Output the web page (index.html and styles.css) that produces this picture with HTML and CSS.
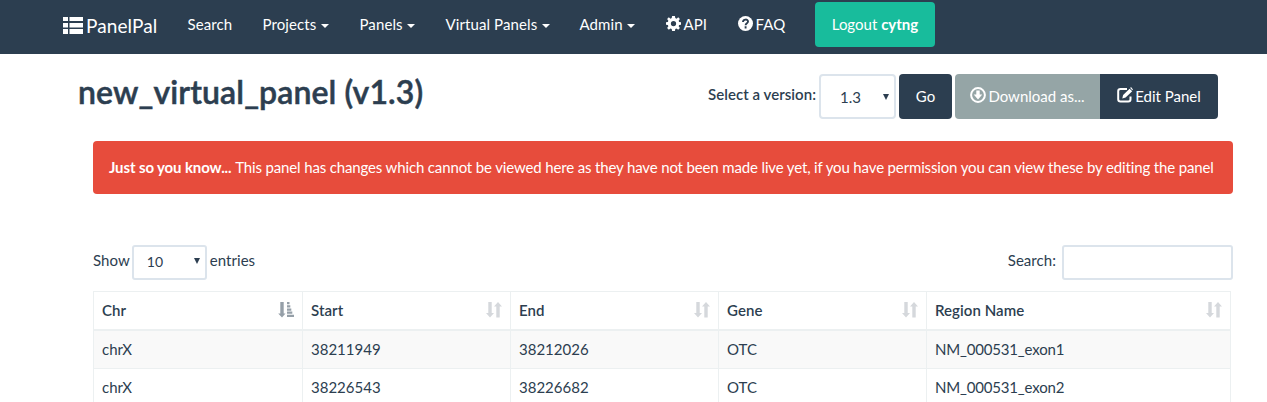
FILE: index.html
```html
<!DOCTYPE html>
<html lang="en">
<head>
<meta charset="utf-8">
<title>PanelPal</title>
<link rel="stylesheet" href="styles.css">
</head>
<body>
<nav class="navbar">
  <a class="brand"><svg class="brand-icon" viewBox="0 0 20 17"><path d="M0 0h5v4H0zM6.500 0H20v4H6.500zM0 6h5v4.500H0zM6.500 6H20v4.500H6.500zM0 12h5v5H0zM6.500 12H20v5H6.500z"/></svg><span class="brand-name">PanelPal</span></a>
  <a class="nav-item search">Search</a>
  <a class="nav-item projects">Projects<i class="caret"></i></a>
  <a class="nav-item panels">Panels<i class="caret"></i></a>
  <a class="nav-item virtual">Virtual Panels<i class="caret"></i></a>
  <a class="nav-item admin">Admin<i class="caret"></i></a>
  <a class="nav-item api"><svg class="icon" viewBox="0 0 16 16"><path fill-rule="evenodd" d="M6.500 0h3l.4 2.200 1.300.6L13.100 1.400l1.700 1.800-1.300 1.800.5 1.400 2 .3v2.600l-2 .4-.5 1.300 1.300 1.800-1.800 1.900-1.800-1.300-1.300.5L9.500 16h-3l-.4-2.100-1.300-.5L3 14.700l-1.800-1.900L2.500 11 2 9.700l-2-.4V6.700l2-.3L2.500 5 1.200 3.200 3 1.400l1.800 1.400 1.300-.6zM8 5.200a2.800 2.800 0 1 0 0 5.600 2.800 2.800 0 0 0 0-5.600z"/></svg>API</a>
  <a class="nav-item faq"><svg class="icon" viewBox="0 0 16 16"><circle cx="8" cy="8" r="8"/><path class="cut-line" d="M5.300 6.500C5.300 3 10.700 3 10.700 5.900c0 1.900-2.600 1.700-2.600 4M8.100 11v2.200"/></svg>FAQ</a>
  <a class="btn logout">Logout <b>cytng</b></a>
</nav>

<header class="page-head">
  <h1 class="title">new_virtual_panel (v1.3)</h1>
  <div class="tools">
    <label class="version-label">Select a version:</label>
    <span class="select version"><span>1.3</span><i class="arrow"></i></span>
    <a class="btn go">Go</a>
    <div class="btn-group">
      <a class="btn download"><svg class="icon" viewBox="0 0 16 16"><circle class="ring" cx="8" cy="8" r="6.900"/><path d="M6.300 3.600h3.400v4h2.600L8 12.400 3.700 7.600h2.600z"/></svg>Download as...</a>
      <a class="btn edit"><svg class="icon" viewBox="0 0 16 16"><path class="ring" d="M10 2H3.500Q1.200 2 1.200 4.300v8Q1.200 14.600 3.500 14.600h7.700q2.300 0 2.300-2.300V9.500"/><path d="M5.300 11.500l.8-3.500L12.600 1.700l2.600 2.500-6.600 6.400zM13.200 1l.8-.9L16 2.400l-.8.900z"/></svg>Edit Panel</a>
    </div>
  </div>
</header>

<div class="alert"><b>Just so you know...</b> <span class="message">This panel has changes which cannot be viewed here as they have not been made live yet, if you have permission you can view these by editing the panel</span></div>

<div class="controls">
  <div class="length"><span>Show</span><span class="select entries"><span>10</span><i class="arrow"></i></span><span>entries</span></div>
  <label class="filter"><span>Search:</span><input class="filter-input" type="text"></label>
</div>

<svg class="defs">
  <symbol id="sort" viewBox="0 0 16 16"><path d="M2.300 0h3.400v11H8l-4 4.500L0 11h2.300zM10.300 15.500v-11H8L12 0l4 4.500h-2.300v11z"/></symbol>
  <symbol id="sorted" viewBox="0 0 16 16"><path d="M2.300 0h3.400v11.500H7.500L4 15.500.2 11.500h2.100zM9 0h2.500v2.300H9zM9 3.300h3.300v2.300H9zM9 6.500h4.300v2.300H9zM9 9.600h5.300v2.200H9zM9 12.700h7V15H9z"/></symbol>
</svg>
<table class="grid">
  <colgroup><col class="c1"><col class="c2"><col class="c2"><col class="c2"><col class="c5"></colgroup>
  <thead><tr>
    <th><div class="head">Chr<svg class="sort active"><use href="#sorted"/></svg></div></th>
    <th><div class="head">Start<svg class="sort"><use href="#sort"/></svg></div></th>
    <th><div class="head">End<svg class="sort"><use href="#sort"/></svg></div></th>
    <th><div class="head">Gene<svg class="sort"><use href="#sort"/></svg></div></th>
    <th><div class="head">Region Name<svg class="sort"><use href="#sort"/></svg></div></th>
  </tr></thead>
  <tbody>
    <tr class="odd"><td>chrX</td><td>38211949</td><td>38212026</td><td>OTC</td><td class="region">NM_000531_exon1</td></tr>
    <tr><td>chrX</td><td>38226543</td><td>38226682</td><td>OTC</td><td class="region">NM_000531_exon2</td></tr>
  </tbody>
</table>
</body>
</html>
```
FILE: styles.css
```css
* { box-sizing: border-box; }
body {
  margin: 0;
  height: 402px;
  overflow: hidden;
  background: #fff;
  color: #2c3e50;
  font: 15px/21px Lato, "Liberation Sans", sans-serif;
}
.navbar {
  display: flex;
  height: 54px;
  padding-left: 63px;
  background: #2c3e50;
  color: #fff;
}
.brand { display: flex; width: 109px; padding-top: 17px; font-size: 19px; }
.brand-icon { width: 20px; height: 17px; fill: #fff; margin-right: 3px; }
.brand-name { line-height: 17px; letter-spacing: .1px; }
.nav-item { padding: 14px 0 0 15.5px; white-space: nowrap; flex: none; letter-spacing: .1px; }
.search { width: 75px; }
.projects { width: 97px; }
.panels { width: 86px; }
.virtual { width: 134px; }
.admin { width: 86px; }
.api { width: 72px; }
.faq { width: 93px; }
.caret {
  display: inline-block;
  margin-left: 4.5px;
  vertical-align: middle;
  border: 4px solid transparent;
  border-top-color: currentColor;
  border-bottom: 0;
}
.icon { width: 15px; height: 15px; margin-right: 3px; vertical-align: -1px; fill: currentColor; }
.cut-line { fill: none; stroke: #2c3e50; stroke-width: 2; }
.ring { fill: none; stroke: currentColor; stroke-width: 2; }
.btn {
  height: 45px;
  padding-top: 12px;
  border-radius: 4px;
  background: #2c3e50;
  color: #fff;
  text-align: center;
  white-space: nowrap;
}
.logout { width: 120px; margin-top: 2px; background: #18bc9c; }
.page-head {
  display: flex;
  justify-content: space-between;
  height: 87px;
  padding: 20px 49px 0 78px;
}
.title {
  margin: 0;
  font-size: 32px;
  line-height: 36px;
  font-weight: 600;
  letter-spacing: .11px;
  white-space: nowrap;
  -webkit-text-stroke: .5px #2c3e50;
}
.tools { display: flex; }
.version-label { width: 111px; padding-top: 10px; font-weight: 600; letter-spacing: .05px; white-space: nowrap; }
.select {
  display: flex;
  align-items: center;
  justify-content: space-between;
  border: 2px solid #dce4ec;
  border-radius: 4px;
}
.arrow { border: 3.5px solid transparent; border-top: 6px solid #2c3e50; border-bottom: 0; margin-top: -2px; }
.version { width: 77px; height: 45px; padding: 2px 5px 0 19px; margin-right: 3px; }
.go { width: 53px; margin-right: 3px; }
.btn-group { display: flex; }
.download { width: 145px; border-radius: 4px 0 0 4px; background: #95a5a6; }
.edit { width: 118px; border-radius: 0 4px 4px 0; }
.download .icon, .edit .icon { width: 16px; height: 16px; margin-right: 2px; }
.alert {
  height: 53px;
  margin: 0 34px 0 93px;
  padding: 16px;
  border-radius: 4px;
  background: #e74c3c;
  color: #fff;
  white-space: nowrap;
  letter-spacing: -.12px;
}
.message { letter-spacing: -.145px; }
.controls {
  display: flex;
  justify-content: space-between;
  margin: 51px 34px 0 93px;
  height: 35px;
}
.length, .filter { display: flex; line-height: 31px; letter-spacing: .05px; }
.entries { width: 75px; height: 35px; padding: 0 5px 2px 13px; margin: 0 3px 0 2px; font-size: 14px; border-radius: 3px; }
.filter-input { width: 171px; height: 35px; margin-left: 6px; border: 2px solid #dce4ec; border-radius: 3px; background: #fff; }
.defs { display: none; }
.grid {
  width: 1138px;
  margin: 11px 0 0 93px;
  table-layout: fixed;
  border-collapse: collapse;
}
.c1 { width: 209px; }
.c2 { width: 208px; }
.grid th, .grid td { border: 1px solid #ecf0f1; padding: 8px; height: 38px; text-align: left; line-height: 21px; }
.grid th { border-bottom-width: 2px; font-weight: 600; letter-spacing: .06px; }
.grid .region { letter-spacing: -.18px; }
.odd { background: #f9f9f9; }
.head { display: flex; justify-content: space-between; align-items: center; }
.sort { width: 16px; height: 16px; margin-top: -2px; fill: #d5d8dc; }
.active { fill: #959fa8; }
```
